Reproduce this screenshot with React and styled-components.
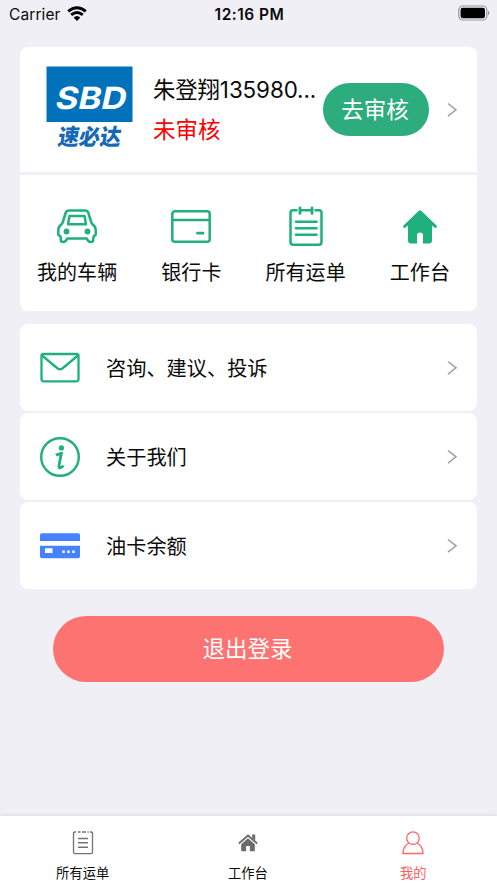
import React from 'react';
import styled, { createGlobalStyle } from 'styled-components';

const GREEN = '#1fb07c';

const GlobalStyle = createGlobalStyle`
  * { box-sizing: border-box; }
  body {
    margin: 0;
    background: #f0eff5;
    font-family: Inter, "Noto Sans CJK SC", sans-serif;
    font-weight: 400;
    color: #0b0b0b;
  }
`;

const Screen = styled.div`
  width: 497px;
  height: 883px;
  display: flex;
  flex-direction: column;
  overflow: hidden;
  background: #f0eff5;
`;

const StatusBar = styled.header`
  height: 47px;
  flex: none;
  padding: 4px 7px 0 9px;
  display: grid;
  grid-template-columns: 1fr auto 1fr;
  align-items: start;
  font-size: 15.5px;
  line-height: 20px;
`;

const Carrier = styled.div`
  display: flex;
  gap: 6px;
  padding-top: 1px;
  letter-spacing: 0.1px;
  svg { margin-top: 1px; }
`;

const Clock = styled.div`
  padding-top: 1px;
  font-weight: 600;
  font-size: 15.5px;
  letter-spacing: 0.5px;
`;

const Battery = styled.div`
  justify-self: end;
  svg { display: block; margin-top: 1px; }
`;

const Main = styled.main`
  flex: 1;
  padding: 0 20px;
`;

const Profile = styled.section`
  height: 125px;
  background: #fff;
  border-radius: 8px 8px 0 0;
  display: flex;
  align-items: center;
  padding: 0 18px 0 26px;
`;

const Person = styled.div`
  width: 166px;
  margin-left: 20px;
  margin-top: 1px;
  font-size: 22.5px;
  line-height: 40px;
  white-space: nowrap;
`;

const PersonName = styled.div`
  font-size: 22.4px;
  letter-spacing: -0.1px;
`;

const ReviewState = styled.div`
  color: #fe0000;
`;

const ReviewButton = styled.button`
  width: 106px;
  height: 53px;
  margin-left: 4px;
  padding: 0 2px 3px 0;
  border: 0;
  border-radius: 27px;
  background: #2dad7d;
  color: #fff;
  font: inherit;
  font-size: 22.5px;
  white-space: nowrap;
`;

const ChevronSvg = styled.svg`
  display: block;
  margin-left: auto;
  flex: none;
`;

const Shortcuts = styled.nav`
  height: 136px;
  margin-top: 3px;
  padding-top: 31px;
  background: #fff;
  border-radius: 0 0 8px 8px;
  display: grid;
  grid-template-columns: repeat(4, 1fr);
`;

const Shortcut = styled.div`
  display: flex;
  flex-direction: column;
  align-items: center;
  font-size: 20px;
  line-height: 30px;
  letter-spacing: 0.1px;
  white-space: nowrap;
  svg { display: block; margin-bottom: 12px; }
`;

const List = styled.section`
  margin-top: 13px;
  display: grid;
  gap: 2.5px;
`;

const ListRow = styled.div`
  height: 86.6px;
  padding: 1px 18px 0 20px;
  background: #fff;
  border-radius: 8px;
  display: flex;
  align-items: center;
  font-size: 20.2px;
`;

const RowLabel = styled.span`
  margin-left: 26px;
`;

const LogoutButton = styled.button`
  display: block;
  width: 391px;
  height: 66px;
  margin: 27px auto 0;
  padding: 0 2px 3px 0;
  border: 0;
  border-radius: 33px;
  background: #fd7371;
  color: #fff;
  font: inherit;
  font-size: 22.5px;
`;

const TabBar = styled.footer`
  height: 67px;
  flex: none;
  padding-top: 13px;
  background: #fff;
  box-shadow: 0 -1px 3px rgba(0, 0, 0, 0.08);
  display: grid;
  grid-template-columns: repeat(3, 165.3px);
`;

const Tab = styled.div`
  display: flex;
  flex-direction: column;
  align-items: center;
  font-size: 13.3px;
  font-weight: 400;
  line-height: 20px;
  color: ${({ $active }) => ($active ? '#fd6060' : '#0b0b0b')};
  svg { display: block; margin-bottom: 6px; }
`;

const Chevron = () => (
  <ChevronSvg width="14" height="18" viewBox="0 0 14 18" fill="none" stroke="#a0a0a0" strokeWidth="1.5">
    <path d="M3 2.500l8 6.300-8 6.300" />
  </ChevronSvg>
);

const WifiIcon = () => (
  <svg width="20" height="15" viewBox="0 0 20 15" fill="none" stroke="#000" strokeWidth="2.9">
    <path d="M1.200 5.400q8.800-7.400 17.600 0M4.200 8.800q5.800-4.800 11.600 0" />
    <path d="M6.600 11.600q3.400-3 6.800 0L10 14.900z" fill="#000" stroke="none" />
  </svg>
);

const BatteryIcon = () => (
  <svg width="32" height="17" viewBox="0 0 32 17">
    <rect x="0.8" y="1" width="28" height="14" rx="4" fill="none" stroke="#98979b" strokeWidth="1.2" />
    <rect x="2.6" y="2.8" width="24.4" height="10.4" rx="2.2" fill="#000" />
    <path d="M30 5.500q3 2.500 0 5z" fill="#98979b" />
  </svg>
);

const Logo = () => (
  <svg width="87" height="87" viewBox="0 0 87 87">
    <rect x="0.5" y="0.5" width="86" height="55.500" fill="#0072bc" />
    <g transform="translate(8 42.500) skewX(-12)">
      <text x="0" y="0" textLength="71" lengthAdjust="spacingAndGlyphs" fontFamily="Inter" fontWeight="700" fontSize="30.500" fill="#fff">SBD</text>
    </g>
    <g transform="translate(11 79) skewX(-9)">
      <text x="0" y="0" textLength="63" lengthAdjust="spacingAndGlyphs" fontFamily="Noto Sans CJK SC" fontWeight="900" fontSize="22.500" fill="#1769b8">速必达</text>
    </g>
  </svg>
);

const CarIcon = () => (
  <svg width="40" height="40" viewBox="0 0 40 40" fill="none" stroke={GREEN} strokeWidth="2.5" strokeLinejoin="round">
    <path d="M5.800 16L8.800 6.500Q9.600 4.500 12 4.500h16q2.400 0 3.200 2L34.200 16q.3 1.600 1.800 2.700 2.700 2.100 2.700 5.300v4.800q-2.500 1.200-2.500 3.200v2q0 2-2.500 2t-4-3.500H10.300q-1.500 3.500-4 3.500t-2.500-2v-2q0-2-2.500-3.200V24q0-3.200 2.700-5.300 1.500-1.100 1.800-2.700z" />
    <path d="M12.500 10h15l1.500 8.200H11z" />
    <circle cx="9.500" cy="25.500" r="2.900" fill={GREEN} stroke="none" />
    <circle cx="30.500" cy="25.500" r="2.900" fill={GREEN} stroke="none" />
  </svg>
);

const BankCardIcon = () => (
  <svg width="40" height="40" viewBox="0 0 40 40" fill="none" stroke={GREEN} strokeWidth="2.500">
    <rect x="1.300" y="5.300" width="37.400" height="30.400" rx="2.500" />
    <path d="M1.500 14h37" />
    <path d="M26.500 27.200h5.500" strokeWidth="2.700" strokeLinecap="round" />
  </svg>
);

const OrdersIcon = () => (
  <svg width="40" height="40" viewBox="0 0 40 40" fill="none" stroke={GREEN} strokeWidth="2.500" strokeLinecap="round">
    <path d="M10.500 4.300H7q-2.500 0-2.500 2.500v29.200Q4.500 38.700 7 38.700h26q2.500 0 2.500-2.700v-29.200Q35.500 4.300 33 4.300h-3.500M14.500 4.300h11" />
    <path d="M14 2v5.400M26 2v5.400" strokeWidth="2.900" />
    <path d="M10 15.800h20.500M10 22.200h20.500M10 28.800h20.500" strokeWidth="2.600" />
  </svg>
);

const HomeIcon = () => (
  <svg width="40" height="40" viewBox="0 0 40 40" fill={GREEN}>
    <path d="M18.800 4.700q1.200-1 2.400 0L36.500 19.500q1 1.200 0 2t-2 0L32 19.500v15q0 3-3 3h-6V28.500Q22.800 26.500 20 26.500t-3 2v9h-6q-3 0-3-3V19.500l-2.500 2q-1.200.8-2 0t0-2z" />
  </svg>
);

const MailIcon = () => (
  <svg width="40" height="40" viewBox="0 0 40 40" fill="none" stroke={GREEN} strokeWidth="2.300" strokeLinejoin="round">
    <rect x="1.500" y="6" width="37" height="27.300" rx="2" />
    <path d="M2 7.500l15.700 13q2.300 1.500 4.600 0L38 7.500" />
  </svg>
);

const InfoIcon = () => (
  <svg width="40" height="40" viewBox="0 0 40 40" fill="none" stroke={GREEN}>
    <circle cx="20" cy="20" r="18.800" strokeWidth="2.400" />
    <circle cx="21.400" cy="10.900" r="2.600" fill={GREEN} stroke="none" />
    <path d="M16 18.300q2.500-1.500 5.300-1.800L19 28.500q-.3 3 1.500 2.300 1.500-.6 3-2" strokeWidth="2.800" />
  </svg>
);

const FuelCardIcon = () => (
  <svg width="40" height="40" viewBox="0 0 40 40">
    <path d="M0 15V9q0-1.800 1.800-1.800h36.400Q40 7.200 40 9v6zM0 19.800h40v10.700q0 1.800-1.800 1.800H1.800Q0 32.300 0 30.500z" fill="#4682ff" />
    <path d="M5 22.300h7.500v4.700H5zM22.300 24.500h2.500V27h-2.500zM27.200 24.500h2.500V27h-2.500zM32.200 24.500h2.500V27h-2.500z" fill="#fff" />
  </svg>
);

const OrdersTabIcon = () => (
  <svg width="24" height="28" viewBox="0 0 24 28" fill="none" stroke="#737373" strokeWidth="1.300">
    <path d="M5 3H3.800Q2.500 3 2.500 4.300v19q0 1.300 1.300 1.300h16.400q1.300 0 1.300-1.300v-19Q21.500 3 20.200 3H19M6.800 3h2.700M11 3h4M16.500 3h1.200" />
    <path d="M7 9.500h10M7 13.800h10M7 18.200h10" strokeWidth="1.400" />
  </svg>
);

const HomeTabIcon = () => (
  <svg width="24" height="28" viewBox="0 0 24 28">
    <path d="M2.800 14.500L12 6.500l9.200 8" fill="none" stroke="#6b6b6b" strokeWidth="1.800" />
    <path d="M16.200 5.500h3v6l-3-2.600zM12 9.300l6.800 5.900v6.200q0 .9-.9.900h-4v-5.300h-3.800v5.300h-4q-.9 0-.9-.9v-6.200z" fill="#6b6b6b" />
  </svg>
);

const UserTabIcon = () => (
  <svg width="24" height="28" viewBox="0 0 24 28" fill="none" stroke="#fd6767" strokeWidth="1.300">
    <circle cx="12" cy="9.200" r="6.300" />
    <path d="M8 14q-6 3-6 10.500h20Q22 17 16 14" />
  </svg>
);

const shortcuts = [
  { label: '我的车辆', Icon: CarIcon },
  { label: '银行卡', Icon: BankCardIcon },
  { label: '所有运单', Icon: OrdersIcon },
  { label: '工作台', Icon: HomeIcon },
];

const rows = [
  { label: '咨询、建议、投诉', Icon: MailIcon },
  { label: '关于我们', Icon: InfoIcon },
  { label: '油卡余额', Icon: FuelCardIcon },
];

const tabs = [
  { label: '所有运单', Icon: OrdersTabIcon },
  { label: '工作台', Icon: HomeTabIcon },
  { label: '我的', Icon: UserTabIcon, active: true },
];

export default function App() {
  return (
    <Screen>
      <GlobalStyle />
      <StatusBar>
        <Carrier>Carrier <WifiIcon /></Carrier>
        <Clock>12:16 PM</Clock>
        <Battery><BatteryIcon /></Battery>
      </StatusBar>
      <Main>
        <Profile>
          <Logo />
          <Person>
            <PersonName>朱登翔135980...</PersonName>
            <ReviewState>未审核</ReviewState>
          </Person>
          <ReviewButton>去审核</ReviewButton>
          <Chevron />
        </Profile>
        <Shortcuts>
          {shortcuts.map(({ label, Icon }) => (
            <Shortcut key={label}><Icon />{label}</Shortcut>
          ))}
        </Shortcuts>
        <List>
          {rows.map(({ label, Icon }) => (
            <ListRow key={label}><Icon /><RowLabel>{label}</RowLabel><Chevron /></ListRow>
          ))}
        </List>
        <LogoutButton>退出登录</LogoutButton>
      </Main>
      <TabBar>
        {tabs.map(({ label, Icon, active }) => (
          <Tab key={label} $active={active}><Icon />{label}</Tab>
        ))}
      </TabBar>
    </Screen>
  );
}
